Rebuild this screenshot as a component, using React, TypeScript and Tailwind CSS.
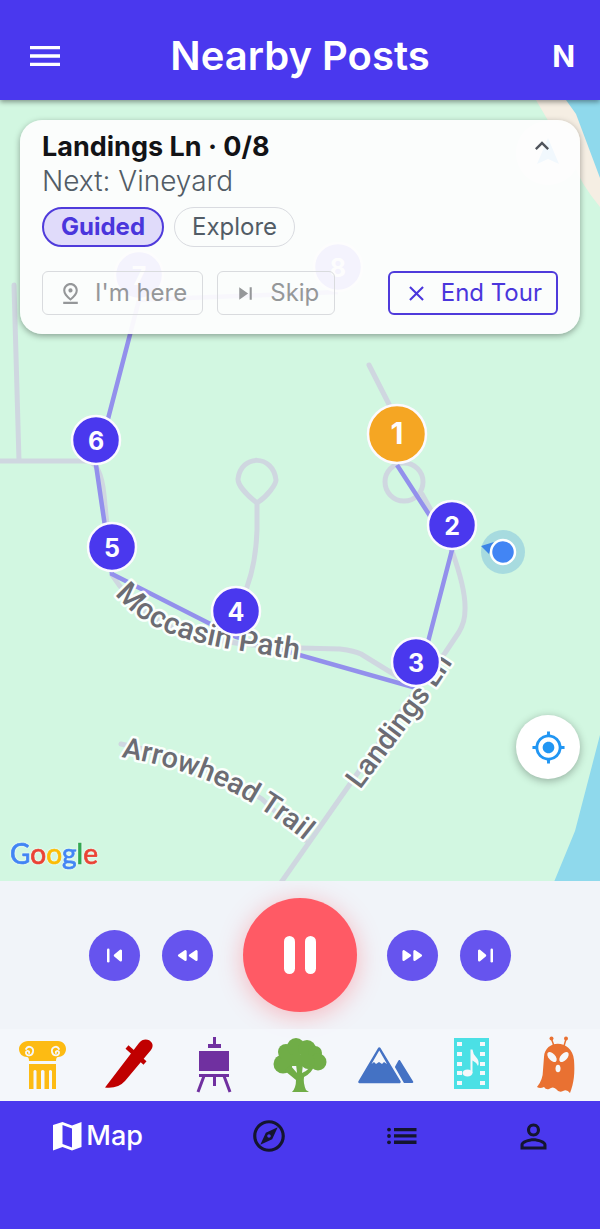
import type { ReactNode } from "react";
import {
  MdClose,
  MdExpandLess,
  MdMenu,
  MdMyLocation,
  MdOutlineExplore,
  MdOutlinePinDrop,
  MdPersonOutline,
  MdSkipNext,
} from "react-icons/md";

type Stop = { n: number; x: number; y: number; next?: boolean };

const stops: Stop[] = [
  { n: 8, x: 338, y: 267 },
  { n: 7, x: 139, y: 275 },
  { n: 6, x: 96, y: 440 },
  { n: 5, x: 112, y: 547 },
  { n: 4, x: 236, y: 611 },
  { n: 3, x: 416, y: 662 },
  { n: 2, x: 452, y: 525 },
  { n: 1, x: 397, y: 434, next: true },
];

const TourMap = () => (
  <svg
    viewBox="0 100 600 781"
    preserveAspectRatio="xMidYMid slice"
    className="absolute inset-0 h-full w-full"
    role="img"
    aria-label="Tour map"
  >
    <rect x="-600" y="0" width="1800" height="1200" fill="#d2f7e1" />
    <path d="M536 100H600V207Q581 184 574 165Z" fill="#f5eee3" />
    <path d="M566 100L576 114L600 178V100Z" fill="#8fd9ec" />
    <path d="M600 735L575 831L554 882H600Z" fill="#8fd9ec" />

    {/* roads */}
    <g fill="none" stroke="#cfd7e0" strokeWidth="5" strokeLinecap="round" strokeLinejoin="round">
      <path d="M14 285L19 461M-5 461H88Q101 464 104 495L107 525" />
      <path d="M112 575Q140 618 185 632T300 648L340 649Q355 651 361 654L400 678L416 688" />
      <path d="M257 503C244 493 238 484 238 479C241 454 273 454 276 480C276 484 268 496 257 503V530Q256 562 247 587L240 620" />
      <path d="M369 365L397 420M422 494L432 512L452 551Q466 590 465 610Q465 622 459 632L445 653L416 690L350 784L280 884" />
      <circle cx="404" cy="482" r="19" />
      <path d="M121 744Q200 760 262 799L305 840" />
    </g>

    {/* walking route */}
    <path
      d="M338 292L139 300L96 465L112 574L236 637L416 688L452 550L397 465"
      fill="none"
      stroke="#9390ec"
      strokeWidth="4.5"
    />

    <g
      className="font-[Roboto,sans-serif] text-[29px] font-medium"
      fill="#6c6c73"
      stroke="#fafffc"
      strokeWidth="5"
      strokeLinejoin="round"
      paintOrder="stroke"
    >
      <path id="moccasin" d="M115 594C145 631 185 641 235 650L340 666" fill="none" stroke="none" />
      <path id="arrowhead" d="M121 757Q185 768 230 791T330 862" fill="none" stroke="none" />
      <path id="landings" d="M360 790L428 699L470 637" fill="none" stroke="none" />
      <text className="text-[30px]"><textPath href="#moccasin">Moccasin Path</textPath></text>
      <text><textPath href="#arrowhead">Arrowhead Trail</textPath></text>
      <text><textPath href="#landings">Landings Ln</textPath></text>
    </g>

    {/* compass */}
    <circle cx="548" cy="153" r="32" fill="#fff" />
    <path d="M548 138L559 164L548 159L537 164Z" fill="#2196f3" />

    {stops.map((s) => (
      <g key={s.n}>
        <circle
          cx={s.x}
          cy={s.y}
          r={s.next ? 29 : 24}
          fill={s.next ? "#f5a623" : "#4a38ee"}
          stroke="#fcfaff"
          strokeWidth="2.5"
        />
        <text
          x={s.x}
          y={s.y + 10}
          textAnchor="middle"
          fill="#fdfcff"
          className={
            s.next
              ? "font-[Inter,sans-serif] text-[30px] font-bold"
              : "font-[Inter,sans-serif] text-[25px] font-bold"
          }
        >
          {s.n}
        </text>
      </g>
    ))}

    {/* current position */}
    <circle cx="503" cy="552" r="22" fill="#4fa3dc" fillOpacity="0.32" />
    <path d="M481 546L494 542L489 554Z" fill="#3b84e6" />
    <circle cx="503" cy="552" r="12" fill="#4285f4" stroke="#fff" strokeWidth="2.5" />

    <text
      x="10"
      y="864"
      className="font-[Lato,sans-serif] text-[28px] drop-shadow-[0_0_1px_white]"
      strokeWidth="0.7"
    >
      <tspan fill="#4285f4" stroke="#4285f4">G</tspan>
      <tspan fill="#ea4335" stroke="#ea4335">o</tspan>
      <tspan fill="#fbbc04" stroke="#fbbc04">o</tspan>
      <tspan fill="#4285f4" stroke="#4285f4">g</tspan>
      <tspan fill="#34a853" stroke="#34a853">l</tspan>
      <tspan fill="#ea4335" stroke="#ea4335">e</tspan>
    </text>
  </svg>
);

const TourCard = () => (
  <section className="relative m-5 rounded-[22px] bg-[#fdfdfd]/95 px-[22px] pt-[10px] pb-[19px] shadow-[0_2px_6px_rgba(0,0,0,0.35)]">
    <button
      type="button"
      aria-label="Collapse"
      className="absolute top-3 right-6 flex size-7 items-center justify-center text-[#50545c]"
    >
      <MdExpandLess size={28} />
    </button>
    <h2 className="text-[27px] leading-[34px] font-bold text-[#121316]">
      Landings Ln · 0/8
    </h2>
    <p className="text-[28px] leading-[34px] font-light text-[#525c66]">
      Next: Vineyard
    </p>

    <div className="mt-[9px] flex gap-[10px] text-[24px]">
      <button
        type="button"
        className="h-10 rounded-full border-2 border-[#4f3bdb] bg-[#e0dbfa] px-[17px] leading-none font-bold text-[#4a36dc]"
      >
        Guided
      </button>
      <button
        type="button"
        className="h-10 rounded-full border border-[#d9dbe0] px-[17px] leading-none text-[#525c66]"
      >
        Explore
      </button>
    </div>

    <div className="mt-6 flex gap-[14px] text-[24px] leading-none">
      <button
        type="button"
        disabled
        className="flex h-11 items-center gap-3 rounded-md border border-[#d9dbde] px-[15px] text-[#959799]"
      >
        <MdOutlinePinDrop size={25} />
        I'm here
      </button>
      <button
        type="button"
        disabled
        className="flex h-11 items-center gap-3 rounded-md border border-[#d9dbde] px-[15px] text-[#959799]"
      >
        <MdSkipNext size={25} />
        Skip
      </button>
      <button
        type="button"
        className="ml-auto flex h-11 items-center gap-3 rounded-md border-2 border-[#4f3bdb] px-[14px] text-[#4a36dc]"
      >
        <MdClose size={25} />
        End Tour
      </button>
    </div>
  </section>
);

const RoundButton = ({ label, children }: { label: string; children: ReactNode }) => (
  <button
    type="button"
    aria-label={label}
    className="flex size-[51px] items-center justify-center rounded-full bg-[#6654ee]"
  >
    <svg
      viewBox="0 0 24 24"
      className="size-[25px]"
      fill="#fff"
      stroke="#fff"
      strokeWidth="2.4"
      strokeLinejoin="round"
      strokeLinecap="round"
    >
      {children}
    </svg>
  </button>
);

const Player = () => (
  <section className="flex items-center justify-center gap-[30px] bg-[#f1f4f9] py-[17px]">
    <div className="flex gap-[22px]">
      <RoundButton label="Previous">
        <path d="M6 6.500V17.500" />
        <path d="M18 7.500V16.500L12.500 12Z" />
      </RoundButton>
      <RoundButton label="Rewind">
        <path d="M10 8V16L4 12ZM20.500 8V16L14.500 12Z" />
      </RoundButton>
    </div>
    <button
      type="button"
      aria-label="Pause"
      className="flex size-[114px] items-center justify-center gap-[10px] rounded-full bg-[#ff5a65] shadow-[0_4px_24px_rgba(255,90,101,0.4)]"
    >
      <span className="h-[38px] w-[11px] rounded-full bg-white" />
      <span className="h-[38px] w-[11px] rounded-full bg-white" />
    </button>
    <div className="flex gap-[22px]">
      <RoundButton label="Fast forward">
        <path d="M3.500 8V16L9.500 12ZM14 8V16L20 12Z" />
      </RoundButton>
      <RoundButton label="Next">
        <path d="M6 7.500V16.500L11.500 12Z" />
        <path d="M18 6.500V17.500" />
      </RoundButton>
    </div>
  </section>
);

const categories: { name: string; art: ReactNode }[] = [
  {
    name: "History",
    art: (
      <>
        <path
          d="M15 6H45C50 6 53 10 53 14C53 19 49 22 45 22Q43 22 43 26H16Q16 22 14 22C10 22 6 19 6 14C6 10 10 6 15 6Z"
          fill="#fdbb13"
        />
        <g fill="none" stroke="#f5f7fa" strokeWidth="1.8" strokeLinecap="round">
          <path d="M13 14C15 10 21 12 20 17C19 22 12 21 13 17C14 15 17 16 16 18" />
          <path d="M46 14C44 10 38 12 39 17C40 22 47 21 46 17C45 15 42 16 43 18" />
        </g>
        <path d="M16 29H43V54H39V36Q37 34 36 36V54H31.500V36Q29.500 34 28 36V54H23.500V36Q22 34 20.500 36V54H16Z" fill="#fdbb13" />
      </>
    ),
  },
  {
    name: "Military",
    art: (
      <g fill="#c00000">
        <path d="M40 8C46 0 58 7 52 15L26 46Q19 54 6 52.500Z" />
        <path d="M28 12L46 28" stroke="#c00000" strokeWidth="4.500" />
      </g>
    ),
  },
  {
    name: "Art",
    art: (
      <g fill="#7030a0">
        <path d="M29 2H32V9H37V13H24V9H29ZM15 16H45V36H15ZM15 39H45V42H32V51H29V42H15Z" />
        <path d="M20 41L14 57M40 41L46 57" stroke="#7030a0" strokeWidth="3" />
      </g>
    ),
  },
  {
    name: "Nature",
    art: (
      <g fill="#70ad47">
        <circle cx="13" cy="29" r="9.500" />
        <circle cx="16" cy="17" r="8" />
        <circle cx="26" cy="12" r="9" />
        <circle cx="37" cy="14" r="9" />
        <circle cx="45" cy="18" r="7" />
        <circle cx="48" cy="27" r="8.500" />
        <circle cx="38" cy="27" r="7" />
        <path d="M12 20H42V31H12Z" />
        <path d="M20 30L27 38L26 29H33L32 38Q40 35 40 29L44 31Q42 38 34 42Q33 48 36 55L39 57H22Q26 53 26 45L15 36Z" />
      </g>
    ),
  },
  {
    name: "Landscape",
    art: (
      <>
        <path
          d="M23.300 13.500L43.500 47H3.500Z"
          fill="#4472c4"
          stroke="#4472c4"
          strokeWidth="2.500"
          strokeLinejoin="round"
        />
        <path d="M23.300 15.500L31 29L28 27L26 29L23 27L20 29L18 27L15.500 29Z" fill="#f5f7fa" />
        <path
          d="M43.300 26L56.300 47H48.500L40 32Z"
          fill="#4472c4"
          stroke="#4472c4"
          strokeWidth="2"
          strokeLinejoin="round"
        />
      </>
    ),
  },
  {
    name: "Entertainment",
    art: (
      <>
        <rect x="13" y="3" width="35" height="51" fill="#4be0e5" />
        <g fill="#f5f7fa">
          {[7, 17, 27, 36, 46].map((y) => (
            <g key={y}>
              <rect x="16" y={y} width="5" height="4" />
              <rect x="39" y={y} width="5" height="4" />
            </g>
          ))}
          <ellipse cx="26.500" cy="38" rx="5" ry="3.500" />
          <path d="M29.500 38V14.500H31.500Q32 19 35 22Q39 26 37 31Q35 27 31.500 25.500V38Z" />
        </g>
      </>
    ),
  },
  {
    name: "Paranormal",
    art: (
      <>
        <g fill="#e97132">
          <path d="M17 22C18 4 45 4 47 25C48 38 47 48 43 58Q40 54 36 56Q32 58 29 54Q26 51 22 54Q19 55 17 52Q13 54 10 52Q16 45 16 35Z" />
          <circle cx="24.500" cy="3.500" r="2" />
          <circle cx="39" cy="3.500" r="2" />
          <path d="M24.500 4L27 11M39 4L37 11" stroke="#e97132" strokeWidth="1.500" />
        </g>
        <g fill="#f5f7fa">
          <ellipse cx="25" cy="22" rx="6" ry="3.300" transform="rotate(48 25 22)" />
          <ellipse cx="37" cy="22" rx="6" ry="3.300" transform="rotate(-48 37 22)" />
          <ellipse cx="31" cy="33.500" rx="2.500" ry="3.800" />
        </g>
      </>
    ),
  },
];

const Categories = () => (
  <section className="relative grid h-[72px] grid-cols-7 bg-[#f5f7fb]/85">
    {categories.map((c) => (
      <button
        key={c.name}
        type="button"
        aria-label={c.name}
        className="flex items-center justify-center"
      >
        <svg viewBox="0 0 60 60" className="size-[60px]">
          {c.art}
        </svg>
      </button>
    ))}
  </section>
);

const TabBar = () => (
  <nav className="grid grid-cols-[203fr_132fr_132fr_132fr] bg-[#4a38ee] pb-[58px] text-[#14152f]">
    <a
      href="#map"
      aria-current="page"
      className="flex h-[70px] items-center justify-center gap-1 pr-2 text-[27px] font-medium text-white"
    >
      <svg viewBox="0 0 30 30" className="size-[30px]" fill="currentColor">
        <path fillRule="evenodd" d="M1 4L10.500 1L20 4.500L29.500 1V26L20 29.500L10.500 26L1 29.500ZM10.500 4V23L20 26.500V7.500Z" />
      </svg>
      Map
    </a>
    <a href="#explore" aria-label="Explore" className="flex h-[70px] items-center justify-center">
      <MdOutlineExplore size={38} />
    </a>
    <a href="#list" aria-label="List" className="flex h-[70px] items-center justify-center">
      <svg viewBox="0 0 30 18" className="w-[30px]" fill="currentColor">
        <path d="M7 1H29.500V4.300H7ZM7 7.300H29.500V10.600H7ZM7 13.600H29.500V16.900H7Z" />
        <circle cx="2" cy="2.600" r="1.900" />
        <circle cx="2" cy="9" r="1.900" />
        <circle cx="2" cy="15.300" r="1.900" />
      </svg>
    </a>
    <a href="#profile" aria-label="Profile" className="flex h-[70px] items-center justify-center">
      <MdPersonOutline size={39} />
    </a>
  </nav>
);

const App = () => {
  return (
    <div className="flex min-h-screen flex-col bg-[#f1f4f9] font-[Inter,sans-serif]">
      <header className="relative z-10 grid h-[100px] grid-cols-[1fr_auto_1fr] items-center bg-[#4a38ee] px-[25px] pt-3 text-white shadow-[0_2px_5px_rgba(0,0,0,0.4)]">
        <button type="button" aria-label="Menu" className="justify-self-start">
          <MdMenu size={40} />
        </button>
        <h1 className="text-[40px] leading-none font-semibold">Nearby Posts</h1>
        <button type="button" aria-label="Account" className="justify-self-end text-[30px] leading-none font-bold">
          N
        </button>
      </header>

      <main className="relative flex flex-1 flex-col justify-between overflow-hidden">
        <TourMap />
        <TourCard />
        <button
          type="button"
          aria-label="My location"
          className="relative mr-5 mb-[102px] flex size-16 items-center justify-center self-end rounded-full bg-white text-[#2196f3] shadow-[0_2px_8px_rgba(0,0,0,0.3)]"
        >
          <MdMyLocation size={35} />
        </button>
      </main>

      <Player />
      <Categories />
      <TabBar />
    </div>
  );
};

export default App;
